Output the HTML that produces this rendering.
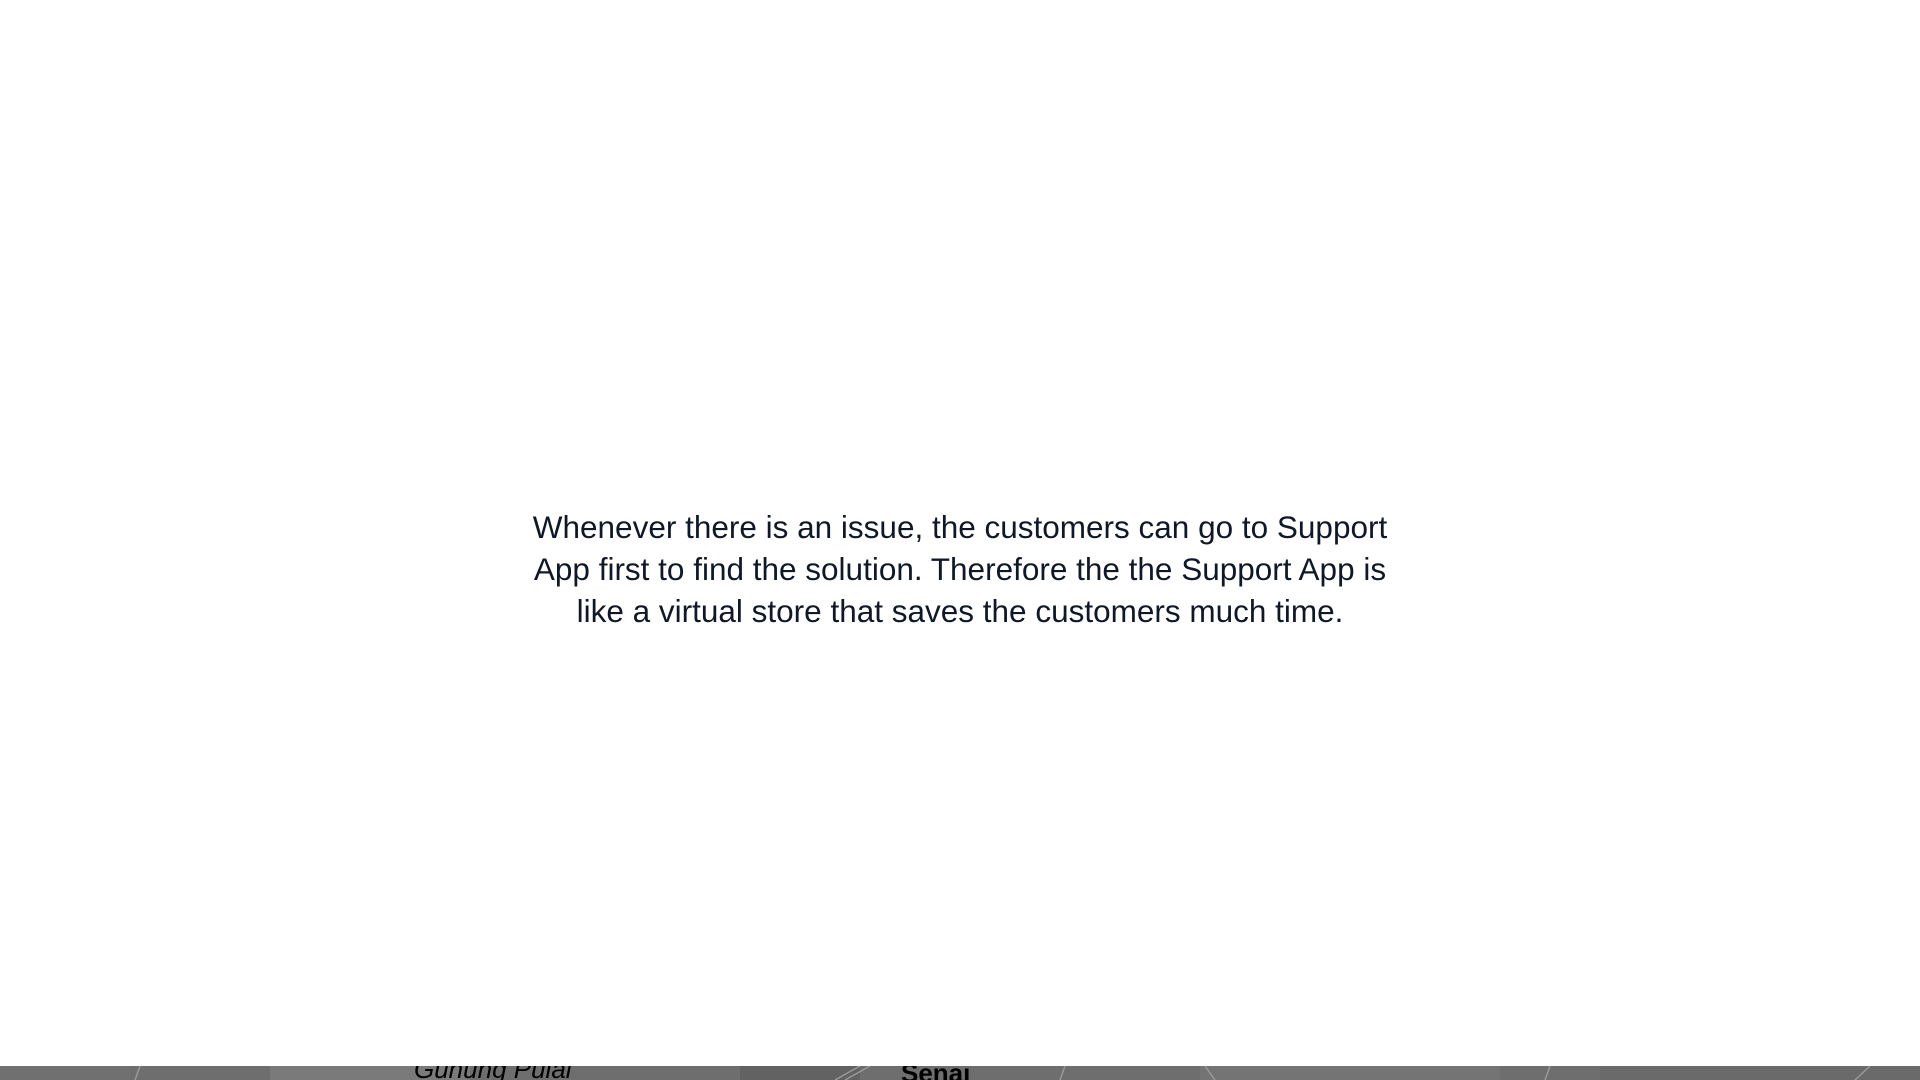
<!DOCTYPE html>
<html>
<head>
<meta charset="utf-8">
<style>
html,body{margin:0;padding:0;width:1920px;height:1080px;overflow:hidden;background:#fff;}
.txt{position:absolute;left:360px;width:1200px;top:506px;text-align:center;
font-family:"Liberation Sans",sans-serif;font-size:31.5px;line-height:42px;color:#101828;}
.map{position:absolute;left:0;top:1066px;width:1920px;height:14px;background:#6e6e6e;overflow:hidden;}
.map .a{position:absolute;top:0;height:14px;background:#777;}
.lbl{position:absolute;font-family:"Liberation Sans",sans-serif;font-size:26px;color:#000;top:-12px;}
</style>
</head>
<body>
<div class="txt">Whenever there is an issue, the customers can go to Support<br>App first to find the solution. Therefore the the Support App is<br>like a virtual store that saves the customers much time.</div>
<div class="map">
<div class="a" style="left:0;width:130px;background:#707070"></div>
<div class="a" style="left:270px;width:200px;background:#7a7a7a"></div>
<div class="a" style="left:740px;width:120px;background:#626262"></div>
<div class="a" style="left:1200px;width:300px;background:#747474"></div>
<div class="a" style="left:1600px;width:320px;background:#6a6a6a"></div>
<svg width="1920" height="14" style="position:absolute;left:0;top:0">
<path d="M135 14 L140 0 M835 14 L860 0 M845 14 L870 0 M1060 14 L1065 0 M1205 0 L1215 14 M1545 14 L1550 0 M1855 14 L1870 0" stroke="#999" stroke-width="1.5" fill="none"/>
</svg>
<div class="lbl" style="left:414px;font-style:italic">Gunung Pulai</div>
<div class="lbl" style="left:901px;font-weight:bold;top:-8px">Senai</div>
</div>
</body>
</html>
